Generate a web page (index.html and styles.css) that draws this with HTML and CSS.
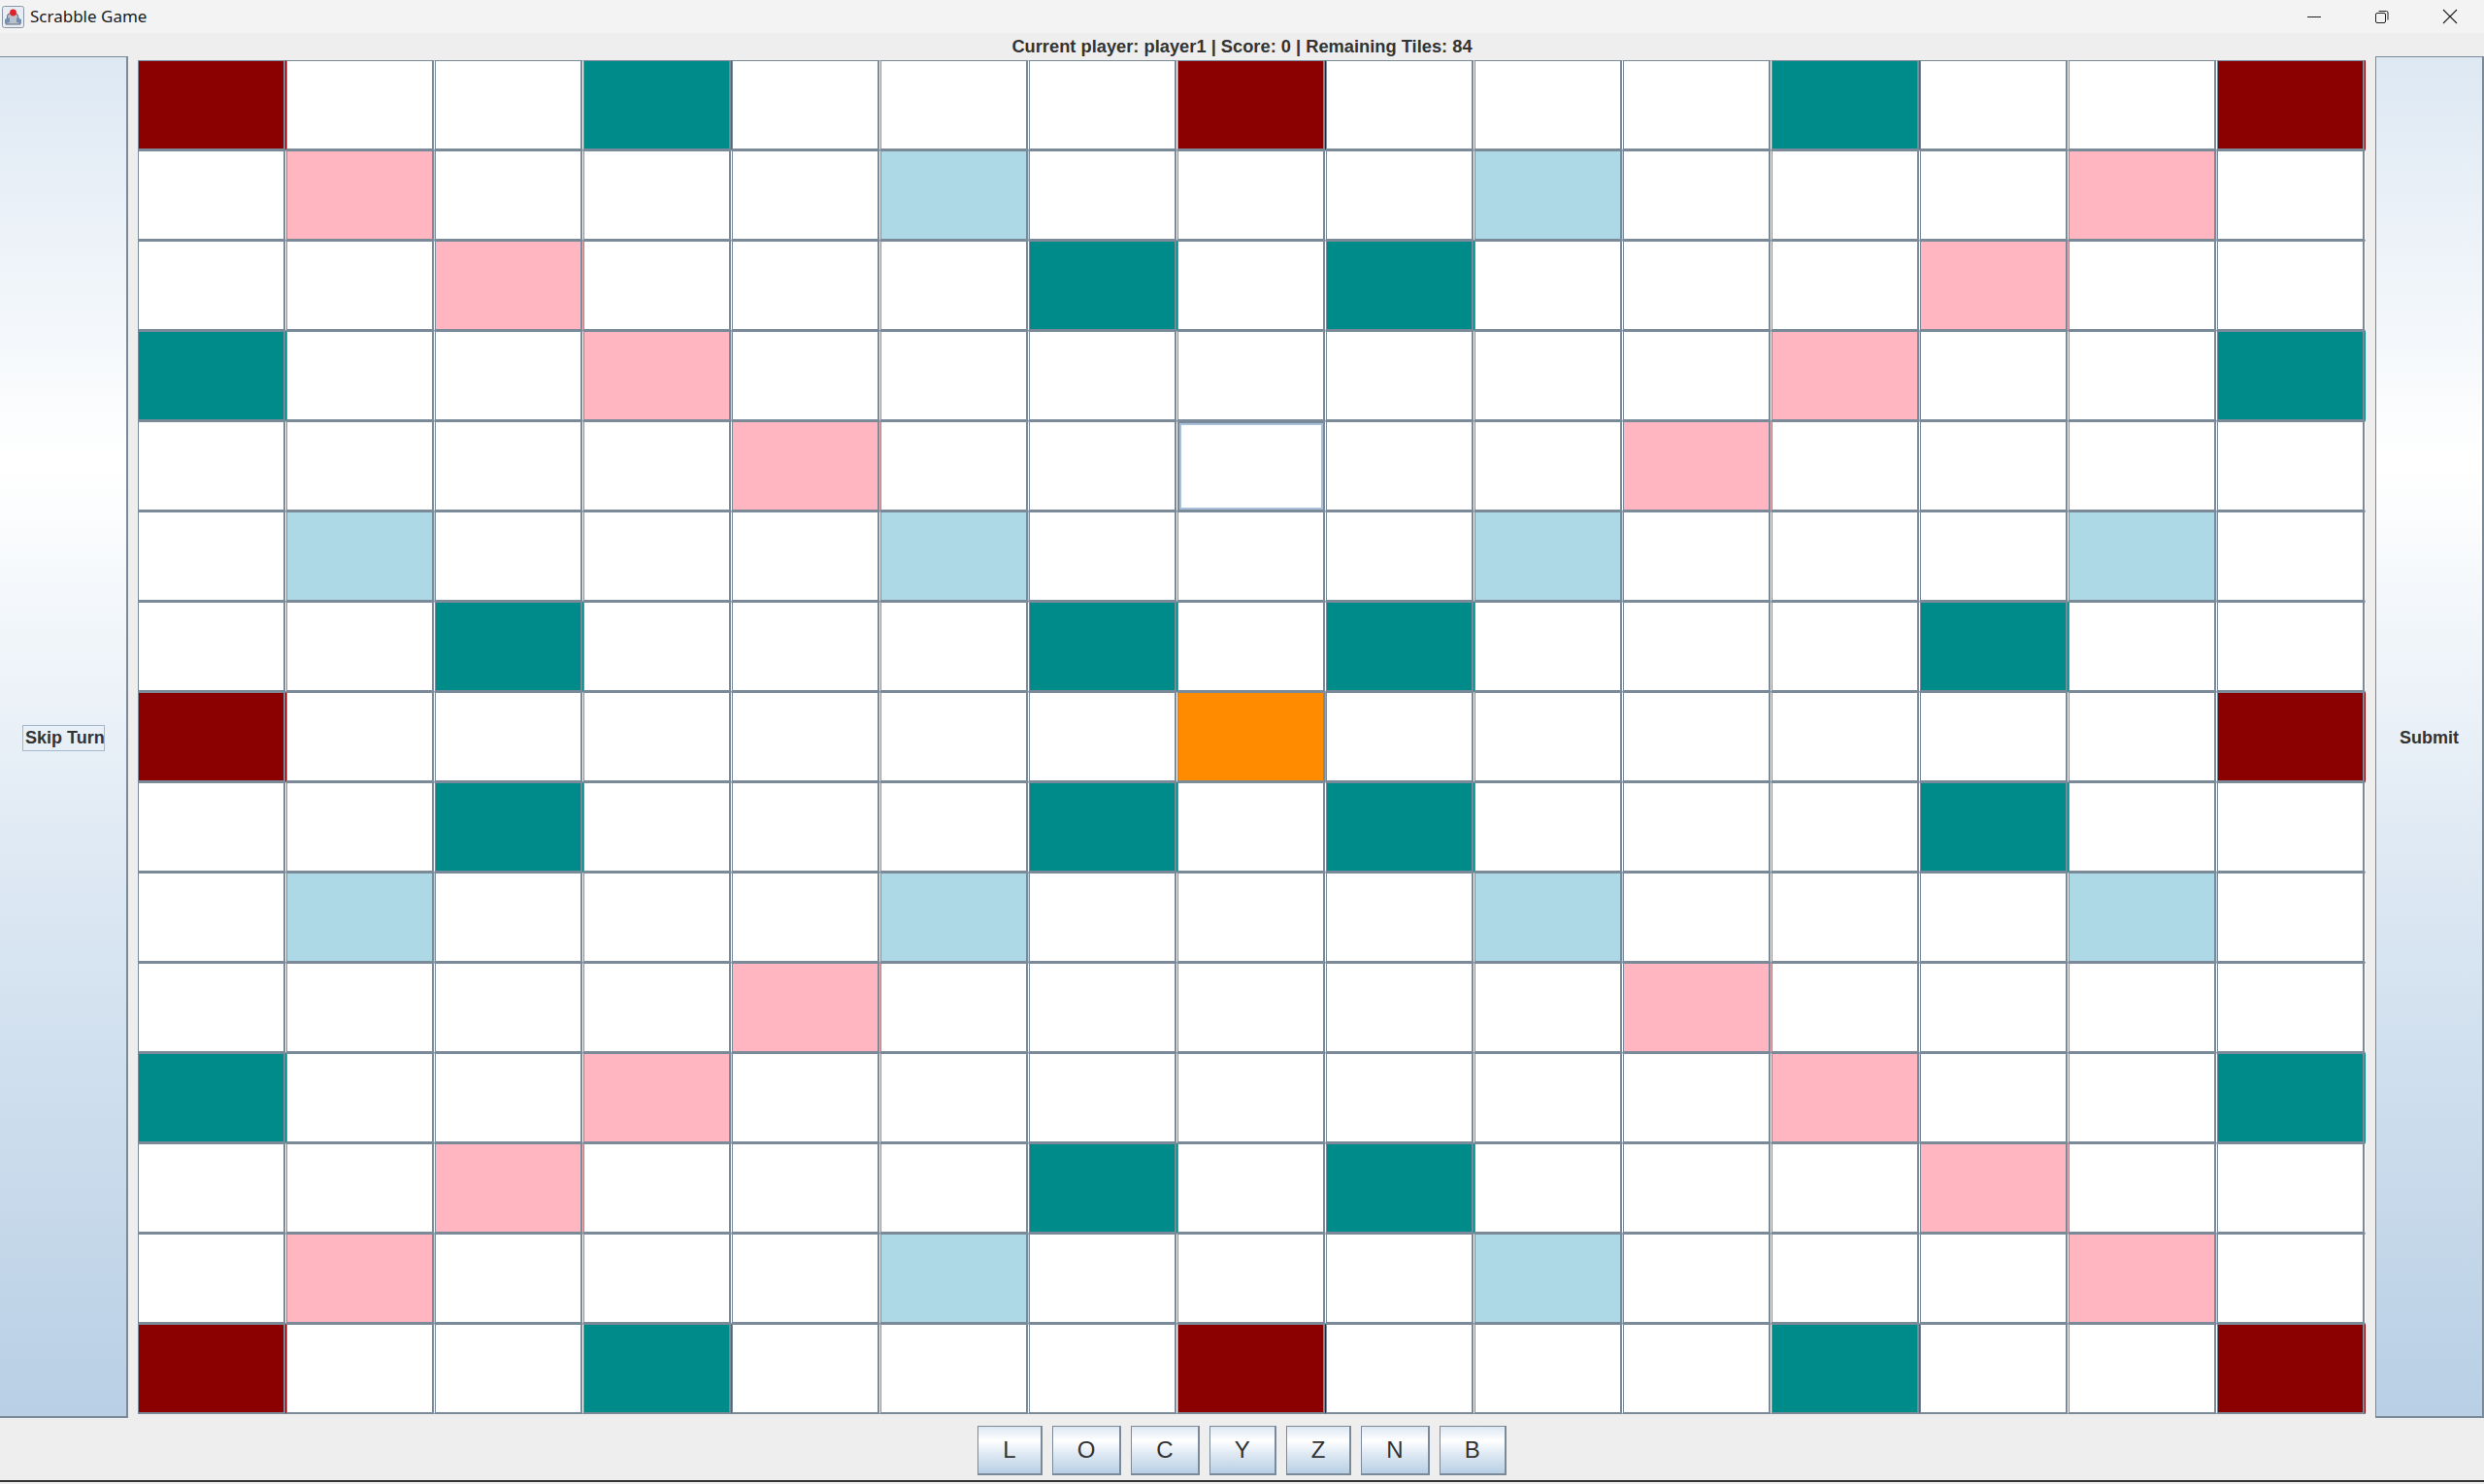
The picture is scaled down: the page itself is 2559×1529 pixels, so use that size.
FILE: index.html
```html
<!DOCTYPE html>
<html lang="en">
<head>
    <meta charset="UTF-8">
    <title>Scrabble Game</title>
    <link rel="stylesheet" href="styles.css">
</head>
<body>

<div class="titlebar">
    <svg class="app-icon" width="23" height="23" viewBox="0 0 23 23">
        <rect x="0.5" y="0.5" width="22" height="22" rx="2" fill="#e8edf3" stroke="#8a97a6"/>
        <path d="M4 19 L6 9 L11 6 L16 9 L19 19 Z" fill="#b9c2cc" stroke="#5f6b78" stroke-width="1"/>
        <path d="M3 14 L8 12 L8 17 L3 18 Z" fill="#6d8fb8"/>
        <path d="M15 12 L20 14 L20 18 L15 17 Z" fill="#6d8fb8"/>
        <circle cx="11.5" cy="7" r="3.4" fill="#e0202a"/>
    </svg>
    <span class="app-title">Scrabble Game</span>
    <div class="controls">
        <svg class="ctl" width="16" height="16" viewBox="0 0 16 16"><path d="M1 8.5 H15" stroke="#222" stroke-width="1"/></svg>
        <svg class="ctl" width="16" height="16" viewBox="0 0 16 16">
            <rect x="1.5" y="4.5" width="10" height="10" rx="1.5" fill="none" stroke="#222"/>
            <path d="M4.5 2.5 H12.5 Q14 2.5 14 4 V11.5" fill="none" stroke="#222"/>
        </svg>
        <svg class="ctl" width="16" height="16" viewBox="0 0 16 16"><path d="M1 1 L15 15 M15 1 L1 15" stroke="#222" stroke-width="1.1"/></svg>
    </div>
</div>

<div class="window">
    <div class="status">Current player: player1 | Score: 0 | Remaining Tiles: 84</div>

    <div class="main">
        <div class="side-btn skip"><span class="focus-text">Skip Turn</span></div>
        <div class="board" id="board"></div>
        <div class="side-btn submit">Submit</div>
    </div>

    <div class="rack">
        <div class="tile">L</div>
        <div class="tile">O</div>
        <div class="tile">C</div>
        <div class="tile">Y</div>
        <div class="tile">Z</div>
        <div class="tile">N</div>
        <div class="tile">B</div>
    </div>
</div>

<script>
    let layout = [
        "R..T...R...T..R",
        ".P...B...B...P.",
        "..P...T.T...P..",
        "T..P.......P..T",
        "....P..F..P....",
        ".B...B...B...B.",
        "..T...T.T...T..",
        "R......O......R",
        "..T...T.T...T..",
        ".B...B...B...B.",
        "....P.....P....",
        "T..P.......P..T",
        "..P...T.T...P..",
        ".P...B...B...P.",
        "R..T...R...T..R"
    ];
    let classes = {
        'R': 'triple-word',
        'T': 'double-letter',
        'P': 'double-word',
        'B': 'triple-letter',
        'O': 'center',
        'F': 'focused'
    };
    let board = document.getElementById('board');

    for(let i = 0; i < layout.length; i++) {
        for(let j = 0; j < layout[i].length; j++) {
            let cell = document.createElement('div');
            cell.className = 'cell';
            let ch = layout[i][j];
            if(classes[ch]) {
                cell.classList.add(classes[ch]);
            }
            board.appendChild(cell);
        }
    }
</script>
</body>
</html>
```

FILE: styles.css
```css
html, body {
    margin: 0;
    padding: 0;
}
body {
    background: #eeeeee;
    width: 2559px;
    height: 1529px;
    overflow: hidden;
    font-family: "Liberation Sans", Arial, sans-serif;
    color: #333333;
}
.titlebar {
    height: 34px;
    background: #f3f3f3;
    display: flex;
    align-items: center;
}
.app-icon {
    margin-left: 2px;
}
.app-title {
    font-family: "Noto Sans", "Open Sans", sans-serif;
    font-size: 17px;
    color: #1b1b1b;
    margin-left: 6px;
    margin-top: -1px;
}
.controls {
    margin-left: auto;
    display: flex;
    align-items: center;
}
.ctl {
    width: 16px;
    height: 16px;
    margin-left: 54px;
}
.controls .ctl:last-child {
    margin-right: 27px;
}
.window {
    display: flex;
    flex-direction: column;
}
.status {
    height: 24px;
    line-height: 24px;
    text-align: center;
    font-weight: bold;
    font-size: 18.3px;
    color: #333333;
    position: relative;
    top: 2px;
}
.main {
    height: 1403px;
    display: flex;
    align-items: center;
}
.side-btn {
    box-sizing: border-box;
    height: 1403px;
    padding-top: 3px;
    display: flex;
    align-items: center;
    justify-content: center;
    font-weight: bold;
    font-size: 18px;
    color: #333333;
    background: linear-gradient(to bottom, #dde8f3 0%, #ffffff 30%, #dde8f3 60%, #b8cfe5 100%);
    border-top: 1px solid #7a8a99;
    border-right: 2px solid #7a8a99;
    border-bottom: 2px solid #7a8a99;
}
.skip {
    width: 132px;
}
.submit {
    width: 112px;
    border-left: 1px solid #7a8a99;
}
.focus-text {
    box-sizing: border-box;
    width: 85px;
    height: 27px;
    line-height: 25px;
    padding-left: 2px;
    border: 1px solid #a3b8cc;
    white-space: nowrap;
    margin-left: 1px;
}
.board {
    margin: 0 10px;
    display: grid;
    grid-template-columns: repeat(15, 153px);
    grid-template-rows: repeat(15, 93px);
}
.cell {
    box-sizing: border-box;
    background: #ffffff;
    border-top: 1px solid #7a8a99;
    border-left: 1px solid #7a8a99;
    border-bottom: 2px solid #7a8a99;
    border-right: 1px solid transparent;
    box-shadow: inset -2px 0 0 #7a8a99;
}
.triple-word {
    background: #8b0000;
}
.double-letter {
    background: #008b8b;
}
.double-word {
    background: #ffb6c1;
}
.triple-letter {
    background: #add8e6;
}
.center {
    background: #ff8c00;
}
.focused {
    box-shadow: inset -2px 0 0 #7a8a99, inset 1px 1px 0 #7a8a99, inset -4px 0 0 #a8c0dc, inset 3px 3px 0 #a8c0dc, inset 0 -2px 0 #a8c0dc;
}
.rack {
    height: 66px;
    box-sizing: border-box;
    padding-top: 8px;
    display: flex;
    justify-content: center;
    align-items: flex-start;
    gap: 10px;
    border-bottom: 2px solid #333333;
}
.tile {
    box-sizing: border-box;
    height: 51px;
    padding: 0 25px;
    display: flex;
    align-items: center;
    justify-content: center;
    font-size: 24px;
    color: #333333;
    background: linear-gradient(to bottom, #dde8f3 0%, #ffffff 30%, #dde8f3 60%, #b8cfe5 100%);
    border-top: 1px solid #7a8a99;
    border-left: 1px solid #7a8a99;
    border-right: 2px solid #7a8a99;
    border-bottom: 2px solid #7a8a99;
}
```
